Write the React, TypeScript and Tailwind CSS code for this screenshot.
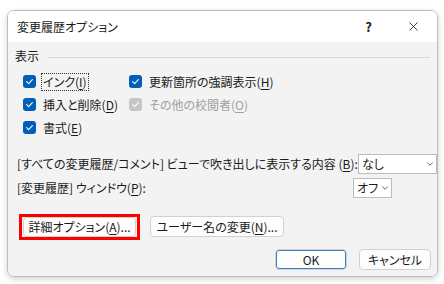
import React from 'react';
import { X, ChevronDown } from 'lucide-react';

const font = { fontFamily: '"Noto Sans CJK JP", "Noto Sans", sans-serif' };

const Check: React.FC<{ disabled?: boolean }> = ({ disabled }) => (
  <span
    className={`flex h-[13px] w-[13px] shrink-0 items-center justify-center rounded-[3px] ${
      disabled ? 'bg-[#c6c6c6]' : 'bg-[#005fb8]'
    }`}
  >
    <svg width="9" height="9" viewBox="0 0 9 9" fill="none">
      <path d="M1.6 4.7 L3.6 6.6 L7.4 2.6" stroke="white" strokeWidth="1.1" strokeLinecap="round" strokeLinejoin="round" />
    </svg>
  </span>
);

const Acc: React.FC<{ k: string }> = ({ k }) => (
  <>
    (<span className="underline underline-offset-2">{k}</span>)
  </>
);

const CheckRow: React.FC<{ label: string; k: string; disabled?: boolean; focus?: boolean }> = ({
  label,
  k,
  disabled,
  focus,
}) => (
  <div className="flex h-[23px] items-center gap-[6px] whitespace-nowrap">
    <Check disabled={disabled} />
    <span
      className={`px-[1px] leading-[16px] ${focus ? 'outline-1 outline-dotted outline-[#333]' : ''} ${
        disabled ? 'text-[#a0a0a0]' : 'text-[#1a1a1a]'
      }`}
    >
      {label}
      <Acc k={k} />
    </span>
  </div>
);

const Btn: React.FC<{ className?: string; children: React.ReactNode }> = ({ className = '', children }) => (
  <div
    className={`flex items-center justify-center whitespace-nowrap rounded-[4px] border border-[#d1d1d1] bg-[#fdfdfd] text-[#1a1a1a] ${className}`}
  >
    {children}
  </div>
);

export default function App() {
  return (
    <div
      className="h-[284px] w-[444px] overflow-hidden bg-white pl-[7px] pt-[10px] text-[12px] [font-feature-settings:'palt']"
      style={font}
    >
      <div className="flex h-[267px] w-[431px] flex-col overflow-hidden rounded-[7px] border border-[#bdbdbd] shadow-[0_2px_6px_rgba(0,0,0,0.18)]">
        {/* title bar */}
        <div className="flex h-[31px] items-center bg-white pl-[9px]">
          <span className="flex-1 text-[#1a1a1a]">変更履歴オプション</span>
          <span className="mr-[34px] text-[13px] font-semibold text-[#1a1a1a]">?</span>
          <X size={15} strokeWidth={1.3} className="mr-[16px] text-[#1a1a1a]" />
        </div>

        {/* body */}
        <div className="flex flex-1 flex-col bg-[#f3f3f3] pl-[7px] pr-[5px] pt-[4px]">
          <div className="flex h-[20px] items-center gap-[8px] pr-[2px]">
            <span className="text-[#1a1a1a]">表示</span>
            <div className="mt-[2px] h-px flex-1 bg-[#d9d9d9]" />
          </div>

          <div className="mt-[4px] flex pl-[8px]">
            <div className="w-[106px]">
              <CheckRow label="インク" k="I" focus />
              <CheckRow label="挿入と削除" k="D" />
              <CheckRow label="書式" k="E" />
            </div>
            <div>
              <CheckRow label="更新箇所の強調表示" k="H" />
              <CheckRow label="その他の校閲者" k="O" disabled />
            </div>
          </div>

          <div className="mt-[15px] flex flex-col gap-[4px] pl-[2px] text-[#1a1a1a]">
            <div className="flex h-[20px] items-center">
              <span className="flex-1 whitespace-nowrap">
                [すべての変更履歴/コメント] ビューで吹き出しに表示する内容 (<span className="underline underline-offset-2">B</span>):
              </span>
              <div className="flex h-[20px] w-[79px] shrink-0 items-center justify-between border border-[#bcbcbc] bg-white pl-[3px] pr-[1px]">
                <span>なし</span>
                <ChevronDown size={10} strokeWidth={2} className="text-[#444]" />
              </div>
            </div>
            <div className="flex h-[20px] items-center">
              <span className="flex-1 whitespace-nowrap">
                [変更履歴] ウィンドウ<Acc k="P" />:
              </span>
              <div className="mr-[40px] flex h-[20px] w-[39px] shrink-0 items-center justify-between border border-[#bcbcbc] bg-white pl-[3px] pr-[1px]">
                <span>オフ</span>
                <ChevronDown size={10} strokeWidth={2} className="text-[#444]" />
              </div>
            </div>
          </div>

          <div className="mt-[18px] flex items-center gap-[14px] pl-[8px]">
            <div className="relative">
              <Btn className="h-[20px] w-[113px]">
                詳細オプション<Acc k="A" />...
              </Btn>
              <div className="absolute -bottom-[3px] -left-[4px] -right-[4px] -top-[3px] border-[3px] border-[#ff0000]" />
            </div>
            <Btn className="h-[21px] w-[134px]">
              ユーザー名の変更<Acc k="N" />...
            </Btn>
          </div>

          <div className="mt-[12px] flex justify-end gap-[12px] pr-[1px]">
            <Btn className="h-[21px] w-[72px] border-[#3b7fc4] shadow-[inset_0_0_0_1px_#3b7fc4]">OK</Btn>
            <Btn className="h-[21px] w-[72px]">キャンセル</Btn>
          </div>
        </div>
      </div>
    </div>
  );
}
